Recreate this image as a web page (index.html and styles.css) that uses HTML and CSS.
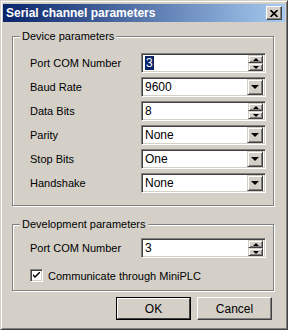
FILE: index.html
```html
<!DOCTYPE html>
<html lang="en">
<head>
  <meta charset="UTF-8" />
  <title>Serial channel parameters</title>
  <link rel="stylesheet" href="styles.css">
</head>
<body>

  <div class="window">
    <div class="titlebar">
      <span class="title">Serial channel parameters</span>
      <span class="close-btn">
        <svg width="8" height="7" viewBox="0 0 8 7"><path d="M0.5 0 L7.5 7 M7.5 0 L0.5 7" stroke="#000" stroke-width="1.6"/></svg>
      </span>
    </div>

    <div class="client">
      <!-- Device parameters -->
      <fieldset class="group group-device">
        <legend>Device parameters</legend>

        <div class="row">
          <span class="label">Port COM Number</span>
          <div class="field">
            <span class="value"><span class="selected">3</span></span>
            <span class="spin">
              <span class="spin-btn"><i class="arrow-up"></i></span>
              <span class="spin-btn"><i class="arrow-down"></i></span>
            </span>
          </div>
        </div>

        <div class="row">
          <span class="label">Baud Rate</span>
          <div class="field">
            <span class="value">9600</span>
            <span class="drop-btn"><i class="arrow-drop"></i></span>
          </div>
        </div>

        <div class="row">
          <span class="label">Data Bits</span>
          <div class="field">
            <span class="value">8</span>
            <span class="spin">
              <span class="spin-btn"><i class="arrow-up"></i></span>
              <span class="spin-btn"><i class="arrow-down"></i></span>
            </span>
          </div>
        </div>

        <div class="row">
          <span class="label">Parity</span>
          <div class="field">
            <span class="value">None</span>
            <span class="drop-btn"><i class="arrow-drop"></i></span>
          </div>
        </div>

        <div class="row">
          <span class="label">Stop Bits</span>
          <div class="field">
            <span class="value">One</span>
            <span class="drop-btn"><i class="arrow-drop"></i></span>
          </div>
        </div>

        <div class="row">
          <span class="label">Handshake</span>
          <div class="field">
            <span class="value">None</span>
            <span class="drop-btn"><i class="arrow-drop"></i></span>
          </div>
        </div>
      </fieldset>

      <!-- Development parameters -->
      <fieldset class="group group-dev">
        <legend>Development parameters</legend>

        <div class="row">
          <span class="label">Port COM Number</span>
          <div class="field">
            <span class="value">3</span>
            <span class="spin">
              <span class="spin-btn"><i class="arrow-up"></i></span>
              <span class="spin-btn"><i class="arrow-down"></i></span>
            </span>
          </div>
        </div>

        <div class="check-row">
          <span class="checkbox">
            <svg width="7" height="7" viewBox="0 0 7 7"><path d="M0 2 L0 4 L2 6 L7 1 L7 -1 L2 4 Z" fill="#000"/></svg>
          </span>
          <span class="check-label">Communicate through MiniPLC</span>
        </div>
      </fieldset>

      <div class="buttons">
        <div class="btn btn-default"><span>OK</span></div>
        <div class="btn"><span>Cancel</span></div>
      </div>
    </div>
  </div>

</body>
</html>
```

FILE: styles.css
```css
body {
  margin: 0;
  background: #d4d0c8;
  font-family: "Liberation Sans", Arial, sans-serif;
  font-size: 11px;
  color: #000;
}

.window {
  width: 288px;
  height: 330px;
  box-sizing: border-box;
  background: #d4d0c8;
  border: 1px solid;
  border-color: #d4d0c8 #404040 #404040 #d4d0c8;
  box-shadow: inset 1px 1px #fff, inset -1px -1px #808080;
  padding: 3px 2px 2px 2px;
}

/* Title bar */
.titlebar {
  height: 18px;
  display: flex;
  align-items: center;
  justify-content: space-between;
  padding: 0 3px 0 3px;
  background: linear-gradient(to right, #0a246a, #a6caf0);
}
.title {
  color: #fff;
  font-weight: bold;
  font-size: 12px;
}
.close-btn {
  width: 16px;
  height: 14px;
  box-sizing: border-box;
  background: #d4d0c8;
  border: 1px solid;
  border-color: #fff #404040 #404040 #fff;
  box-shadow: inset -1px -1px #808080;
  display: flex;
  align-items: center;
  justify-content: center;
}

.client {
  padding: 7px 11px 0 9px;
}

/* Group boxes */
.group {
  margin: 0;
  min-width: 0;
  border: 1px solid #808080;
  box-shadow: inset 1px 1px #fff, 1px 1px #fff;
  padding: 10px 7px 12px 17px;
}
.group legend {
  margin-left: -10px;
  padding: 0 2px;
  background: #d4d0c8;
  line-height: 14px;
}
.group-dev {
  margin-top: 11px;
  padding-top: 7px;
  padding-bottom: 8px;
}

.row {
  display: flex;
  align-items: center;
  height: 20px;
  margin-bottom: 4px;
}
.row:last-child {
  margin-bottom: 0;
}
.label {
  width: 111px;
}

/* Sunken edit / combo field */
.field {
  width: 125px;
  height: 20px;
  box-sizing: border-box;
  display: flex;
  align-items: center;
  background: #fff;
  border: 1px solid;
  border-color: #808080 #fff #fff #808080;
  box-shadow: inset 1px 1px #404040, inset -1px -1px #d4d0c8;
  padding: 2px;
}
.value {
  flex: 1;
  padding-left: 1px;
  font-size: 12px;
}
.selected {
  background: #0a246a;
  color: #fff;
  padding: 0 1px;
}

.spin {
  display: flex;
  flex-direction: column;
  width: 15px;
  height: 16px;
}
.spin-btn,
.drop-btn {
  box-sizing: border-box;
  display: flex;
  align-items: center;
  justify-content: center;
  background: #d4d0c8;
  border: 1px solid;
  border-color: #d4d0c8 #404040 #404040 #d4d0c8;
  box-shadow: inset 1px 1px #fff, inset -1px -1px #808080;
}
.spin-btn {
  height: 8px;
}
.drop-btn {
  width: 16px;
  height: 16px;
}

.arrow-up,
.arrow-down,
.arrow-drop {
  width: 0;
  height: 0;
  border-left: 3px solid transparent;
  border-right: 3px solid transparent;
}
.arrow-up {
  border-bottom: 3px solid #000;
}
.arrow-down {
  border-top: 3px solid #000;
}
.arrow-drop {
  border-left-width: 4px;
  border-right-width: 4px;
  border-top: 4px solid #000;
}

/* Checkbox */
.check-row {
  display: flex;
  align-items: center;
  margin-top: 11px;
}
.checkbox {
  width: 13px;
  height: 13px;
  box-sizing: border-box;
  display: flex;
  align-items: center;
  justify-content: center;
  background: #fff;
  border: 1px solid;
  border-color: #808080 #fff #fff #808080;
  box-shadow: inset 1px 1px #404040, inset -1px -1px #d4d0c8;
  margin-right: 5px;
}
.check-label {
  font-size: 11px;
}

/* Buttons */
.buttons {
  display: flex;
  justify-content: flex-end;
  gap: 6px;
  margin-top: 6px;
  padding-right: 2px;
}
.btn {
  width: 75px;
  height: 23px;
  box-sizing: border-box;
  display: flex;
  align-items: center;
  justify-content: center;
  border: 1px solid;
  border-color: #fff #404040 #404040 #fff;
  box-shadow: inset -1px -1px #808080;
  font-size: 12px;
}
.btn-default {
  border: 1px solid #000;
  box-shadow: none;
}
.btn-default span {
  display: flex;
  align-items: center;
  justify-content: center;
  width: 100%;
  height: 100%;
  box-sizing: border-box;
  border: 1px solid;
  border-color: #fff #404040 #404040 #fff;
}
```
